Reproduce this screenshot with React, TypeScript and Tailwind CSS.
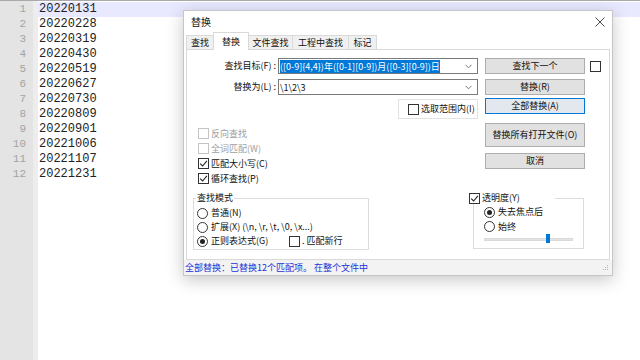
import React from 'react';

const lines = [
  '20220131', '20220228', '20220319', '20220430', '20220519', '20220627',
  '20220730', '20220809', '20220901', '20221006', '20221107', '20221231',
];

function CheckBox({ checked = false, disabled = false }: { checked?: boolean; disabled?: boolean }) {
  return (
    <span
      className={`w-[11px] h-[11px] shrink-0 bg-white border flex items-center justify-center ${
        disabled ? 'border-[#c4c4c4]' : 'border-[#333333]'
      }`}
    >
      {checked && (
        <svg width="9" height="9" viewBox="0 0 9 9">
          <path d="M1.2 4.6 L3.6 7 L7.9 1.8" fill="none" stroke="#222" strokeWidth="1.1" />
        </svg>
      )}
    </span>
  );
}

function Radio({ checked = false }: { checked?: boolean }) {
  return (
    <span className="w-[11px] h-[11px] shrink-0 rounded-full bg-white border border-[#333333] flex items-center justify-center">
      {checked && <span className="w-[5px] h-[5px] rounded-full bg-[#222]" />}
    </span>
  );
}

function Button({ label, tall = false, focused = false }: { label: string; tall?: boolean; focused?: boolean }) {
  return (
    <div
      className={`w-[100px] flex items-center justify-center border ${tall ? 'h-[24px]' : 'h-[16px]'} ${
        focused ? 'border-[#0078d7] bg-[#e3e8ee]' : 'border-[#adadad] bg-[#e1e1e1]'
      }`}
    >
      {label}
    </div>
  );
}

function Combo({ children }: { children: React.ReactNode }) {
  return (
    <div className="w-[200px] h-[16px] bg-white border border-[#7a7a7a] flex items-center justify-between pl-[1px] pr-[5px]">
      <div className="flex items-center leading-[13px]">{children}</div>
      <svg width="7" height="5" viewBox="0 0 7 5">
        <path d="M0.5 0.8 L3.5 3.8 L6.5 0.8" fill="none" stroke="#666" strokeWidth="0.9" />
      </svg>
    </div>
  );
}

export default function App() {
  const tabs = ['查找', '替换', '文件查找', '工程中查找', '标记'];
  const tabWidths = ['w-[28px]', 'w-[36px]', 'w-[45px]', 'w-[57px]', 'w-[29px]'];

  return (
    <div className="w-[640px] h-[360px] relative overflow-hidden bg-white border-t border-[#a9a9a9]">
      {/* editor */}
      <div className="flex h-full">
        <div className="w-[33px] h-full bg-[#e4e4e4] pt-[1px] pr-[7px] text-right text-[11px] text-[#a3a3a3] font-['Liberation_Mono',monospace]">
          {lines.map((_, i) => (
            <div key={i} className="h-[15px] leading-[15px]">{i + 1}</div>
          ))}
        </div>
        <div className="w-[5px] h-full bg-[#ededed]" />
        <div className="flex-1 pt-[1px] text-[12px] text-[#222] font-['Liberation_Mono',monospace]">
          {lines.map((l, i) => (
            <div key={l} className={`h-[15px] leading-[15px] pl-[1px] ${i === 0 ? 'bg-[#e8e8ff]' : ''}`}>{l}</div>
          ))}
        </div>
      </div>

      {/* replace dialog */}
      <div className="absolute left-[183px] top-[9px] w-[430px] h-[266px] bg-white border border-[#c6c6c6] shadow-[0_4px_16px_rgba(0,0,0,0.22)] flex flex-col text-[9px] leading-[12px] text-[#111] font-['Noto_Sans_CJK_SC',sans-serif]">
        <div className="h-[21px] flex items-center justify-between pl-[7px] pr-[7px]">
          <span className="text-[10px]">替换</span>
          <svg width="10" height="10" viewBox="0 0 10 10">
            <path d="M0.5 0.5 L9.5 9.5 M9.5 0.5 L0.5 9.5" stroke="#333" strokeWidth="0.9" />
          </svg>
        </div>

        <div className="h-[17px] flex items-end pl-[2px]">
          {tabs.map((t, i) =>
            i === 1 ? (
              <div
                key={t}
                className={`${tabWidths[i]} h-[18px] -mb-px -ml-px relative z-10 bg-white border border-b-0 border-[#d9d9d9] flex items-center justify-center`}
              >
                {t}
              </div>
            ) : (
              <div
                key={t}
                className={`${tabWidths[i]} h-[14px] ${i > 0 ? '-ml-px' : ''} bg-[#f0f0f0] border border-b-0 border-[#d9d9d9] flex items-center justify-center`}
              >
                {t}
              </div>
            )
          )}
        </div>

        <div className="ml-[2px] w-[424px] h-[211px] bg-white border border-[#d9d9d9] flex flex-col">
          <div className="flex pt-[8px]">
            {/* left column */}
            <div className="w-[291px] flex flex-col">
              <div className="flex items-center h-[16px]">
                <span className="w-[89px] text-right">查找目标(F) :</span>
                <div className="ml-[2px]">
                  <Combo>
                    <span className="bg-[#0078d7] text-white">([0-9]{'{'}4,4{'}'})年([0-1][0-9])月([0-3][0-9])日</span>
                  </Combo>
                </div>
              </div>
              <div className="flex items-center h-[16px] mt-[5px]">
                <span className="w-[89px] text-right">替换为(L) :</span>
                <div className="ml-[2px]">
                  <Combo>
                    <span>\1\2\3</span>
                  </Combo>
                </div>
              </div>
              <div className="mt-[4px] ml-[211px] w-[80px] h-[20px] border border-[#e3e3e3] flex items-center pl-[9px] gap-[2px]">
                <CheckBox />
                <span>选取范围内(I)</span>
              </div>
              <div className="mt-[7px] flex flex-col pl-[11px]">
                <div className="h-[15px] flex items-center gap-[2px] text-[#a0a0a0]">
                  <CheckBox disabled />
                  <span>反向查找</span>
                </div>
                <div className="h-[15px] flex items-center gap-[2px] text-[#a0a0a0]">
                  <CheckBox disabled />
                  <span>全词匹配(W)</span>
                </div>
                <div className="h-[15px] flex items-center gap-[2px]">
                  <CheckBox checked />
                  <span>匹配大小写(C)</span>
                </div>
                <div className="h-[15px] flex items-center gap-[2px]">
                  <CheckBox checked />
                  <span>循环查找(P)</span>
                </div>
              </div>
            </div>

            {/* right column */}
            <div className="ml-[7px] flex flex-col">
              <div className="flex items-center">
                <Button label="查找下一个" />
                <span className="ml-[5px]"><CheckBox /></span>
              </div>
              <div className="mt-[5px]"><Button label="替换(R)" /></div>
              <div className="mt-[3px]"><Button label="全部替换(A)" focused /></div>
              <div className="mt-[9px]"><Button label="替换所有打开文件(O)" tall /></div>
              <div className="mt-[6px]"><Button label="取消" /></div>
            </div>
          </div>

          <div className="mt-[6px] flex items-start">
            <fieldset className="ml-[6px] w-[176px] border border-[#dcdcdc] px-[2px] pb-[1px]">
              <legend className="px-[1px] leading-[12px]">查找模式</legend>
              <div className="mt-[2px] pl-[1px]">
                <div className="h-[14px] flex items-center gap-[3px]">
                  <Radio />
                  <span>普通(N)</span>
                </div>
                <div className="h-[14px] flex items-center gap-[3px]">
                  <Radio />
                  <span>扩展(X) (\n, \r, \t, \0, \x...)</span>
                </div>
                <div className="h-[14px] flex items-center">
                  <div className="w-[92px] flex items-center gap-[3px]">
                    <Radio checked />
                    <span>正则表达式(G)</span>
                  </div>
                  <CheckBox />
                  <span className="ml-[2px]">. 匹配新行</span>
                </div>
              </div>
            </fieldset>

            <div className="ml-[104px] mt-[6px] relative w-[111px] h-[51px] border border-[#dcdcdc] pt-[6px] pl-[10px]">
              <div className="absolute -left-[5px] -top-[7px] w-[86px] h-[12px] bg-white flex items-center gap-[2px]">
                <CheckBox checked />
                <span>透明度(Y)</span>
              </div>
              <div className="h-[14px] flex items-center gap-[3px]">
                <Radio checked />
                <span>失去焦点后</span>
              </div>
              <div className="h-[15px] flex items-center gap-[3px]">
                <Radio />
                <span>始终</span>
              </div>
              <div className="relative w-[89px] h-[10px] flex items-center">
                <div className="w-full h-[3px] bg-[#e4e4e4] border border-[#dadada]" />
                <div className="absolute left-[62px] top-0 w-[4px] h-[9px] bg-[#0078d7]" />
              </div>
            </div>
          </div>
        </div>

        <div className="flex-1 bg-[#f3f3f3] flex items-center justify-between pl-[1px] pr-[3px] text-[#2430d8]">
          <span>全部替换：已替换12个匹配项。 在整个文件中</span>
          <svg width="7" height="7" viewBox="0 0 7 7">
            <rect x="5" y="1" width="1" height="1" fill="#b5b5b5" />
            <rect x="3" y="3" width="1" height="1" fill="#b5b5b5" />
            <rect x="5" y="3" width="1" height="1" fill="#b5b5b5" />
            <rect x="1" y="5" width="1" height="1" fill="#b5b5b5" />
            <rect x="3" y="5" width="1" height="1" fill="#b5b5b5" />
            <rect x="5" y="5" width="1" height="1" fill="#b5b5b5" />
          </svg>
        </div>
      </div>
    </div>
  );
}
